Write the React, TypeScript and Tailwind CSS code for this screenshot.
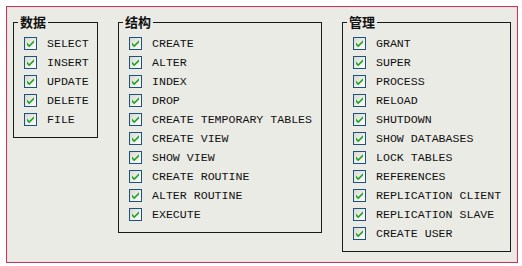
import React from 'react';

const groups: { title: string; width: string; items: string[] }[] = [
    { title: '数据', width: 'w-[85px]', items: ['SELECT', 'INSERT', 'UPDATE', 'DELETE', 'FILE'] },
    {
        title: '结构',
        width: 'w-[204px]',
        items: [
            'CREATE', 'ALTER', 'INDEX', 'DROP', 'CREATE TEMPORARY TABLES',
            'CREATE VIEW', 'SHOW VIEW', 'CREATE ROUTINE', 'ALTER ROUTINE', 'EXECUTE',
        ],
    },
    {
        title: '管理',
        width: 'w-[169px]',
        items: [
            'GRANT', 'SUPER', 'PROCESS', 'RELOAD', 'SHUTDOWN', 'SHOW DATABASES',
            'LOCK TABLES', 'REFERENCES', 'REPLICATION CLIENT', 'REPLICATION SLAVE', 'CREATE USER',
        ],
    },
];

// XP style checked box
const CheckBox = () => (
    <svg width="13" height="13" viewBox="0 0 13 13" className="shrink-0">
        <defs>
            <linearGradient id="cbfill" x1="0" y1="0" x2="1" y2="1">
                <stop offset="0" stopColor="#d8d8d0" />
                <stop offset="1" stopColor="#ffffff" />
            </linearGradient>
        </defs>
        <rect x="0.5" y="0.5" width="12" height="12" fill="url(#cbfill)" stroke="#1c5180" />
        <path d="M3 5.6 L5.2 7.9 L10 3.2 L10 5.6 L5.2 10.3 L3 8 Z" fill="#21a121" />
    </svg>
);

export default function App() {
    return (
        <div className="w-[522px] h-[266px] bg-white pt-[6px] pl-[6px]">
            <div className="w-[512px] h-[257px] border border-[#c23a5a] bg-[#ebebe5] shadow-[inset_0_0_0_1px_#f3dde2] pt-[7px] pl-[6px] flex items-start gap-[20px]">
                {groups.map(g => (
                    <fieldset key={g.title} className={`${g.width} border border-[#1a1a1a] pl-[10px] pt-[4px] pb-[8px]`}>
                        <legend className="ml-[-6px] px-[2px] text-[13px] leading-[16px] font-bold text-[#111] [font-family:'Noto_Sans_CJK_SC',sans-serif]">
                            {g.title}
                        </legend>
                        {g.items.map(item => (
                            <div key={item} className="h-[19px] flex items-center gap-[10px]">
                                <CheckBox />
                                <span className="text-[11.6px] leading-none text-[#111] whitespace-nowrap [font-family:'Liberation_Mono',monospace]">
                                    {item}
                                </span>
                            </div>
                        ))}
                    </fieldset>
                ))}
            </div>
        </div>
    );
}
